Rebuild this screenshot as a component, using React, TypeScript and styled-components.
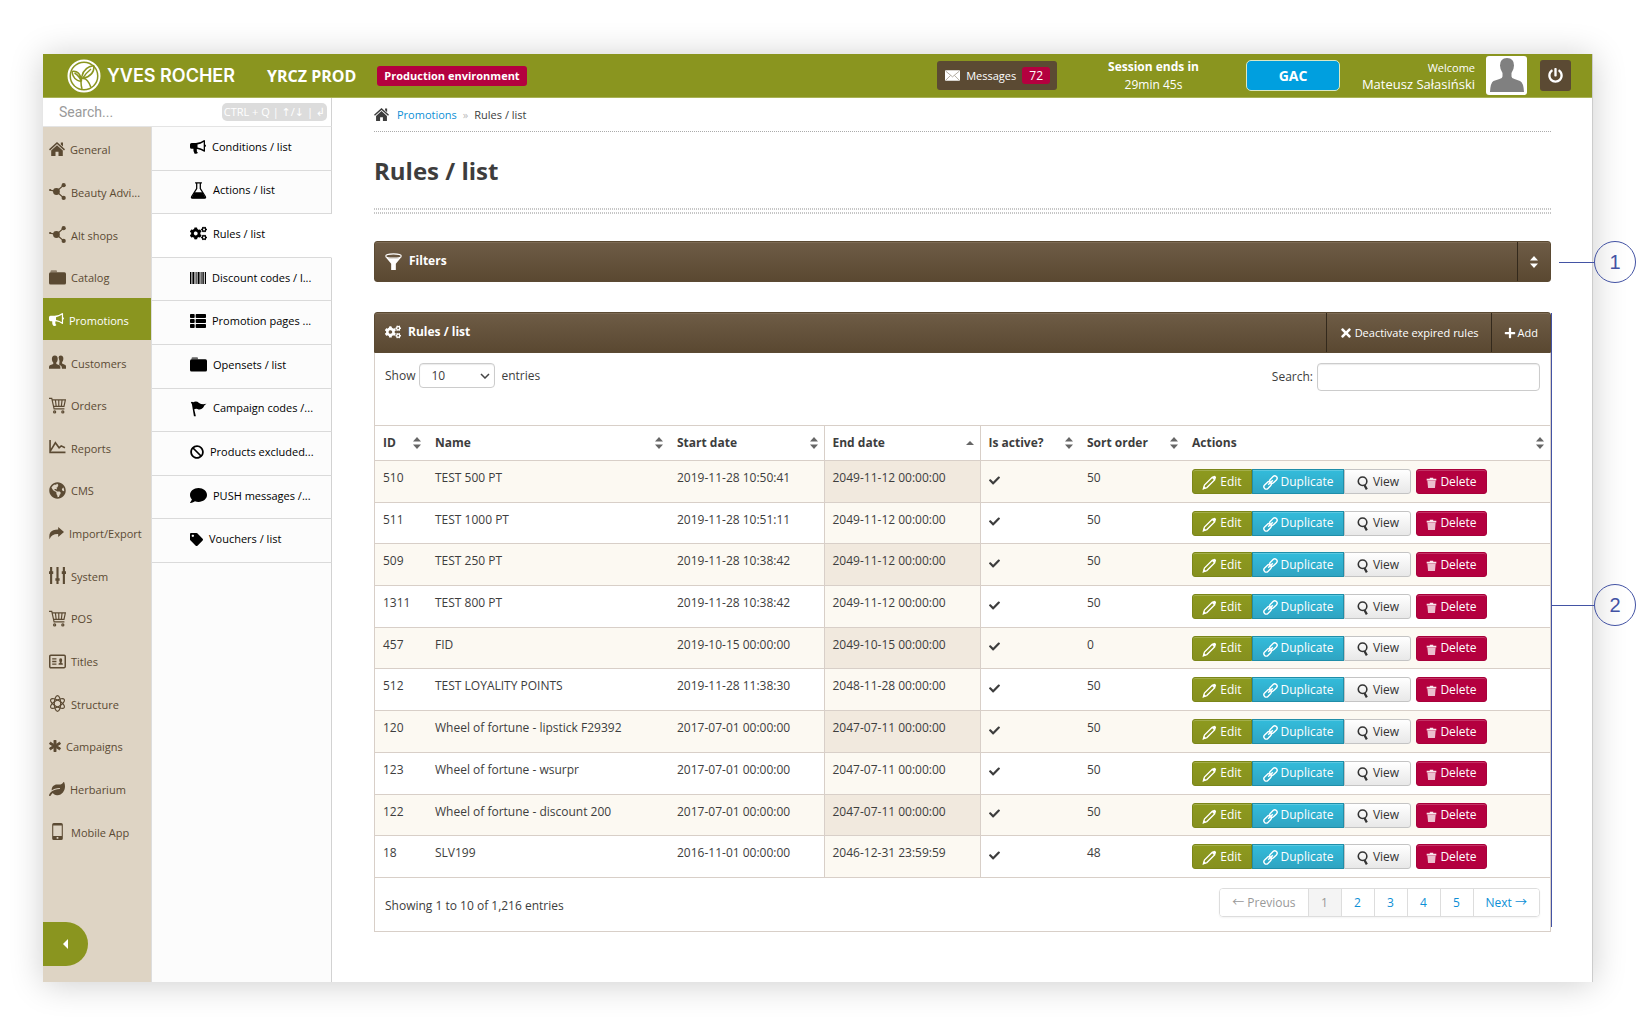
import React, { useState } from "react";
import styled, { createGlobalStyle, css } from "styled-components";
import {
  FaAsterisk,
  FaBan,
  FaCheck,
  FaCogs,
  FaComment,
  FaGlobeAmericas,
  FaLeaf,
  FaPlus,
  FaPowerOff,
  FaTag,
  FaThList,
  FaTimes,
} from "react-icons/fa";

const olive = "#8a951f";
const brown = "#5b4a33";
const sand = "#ded4c4";
const line = "#d8cfc8";
const crimson = "#b4003f";
const link = "#0d8fd6";
const ink = "#3d3d3d";
const marker = "#4353a4";

const GlobalStyle = createGlobalStyle`
  *, *::before, *::after { box-sizing: border-box; }
  body {
    margin: 0;
    background: #fff;
    color: ${ink};
    font-family: "Open Sans", "Noto Sans", sans-serif;
    font-size: 12px;
    line-height: 20px;
  }
  button, input, select { font-family: inherit; font-size: inherit; color: inherit; }
  ul { list-style: none; margin: 0; padding: 0; }
  a { text-decoration: none; color: inherit; }
`;

/* ---------- icons ---------- */

type IconProps = { size?: number };

const Svg = ({ size = 17, children }: IconProps & { children: React.ReactNode }) => (
  <svg width={size} height={size} viewBox="0 0 16 16" fill="currentColor" aria-hidden="true">
    {children}
  </svg>
);

const HomeIcon = (p: IconProps) => (
  <Svg {...p}>
    <path d="M8 1 16 8.300l-1 1.100-7-6.300-7 6.300L0 8.300zM11.800 1.500h2.200v4l-2.200-2z" />
    <path d="M8 4.300l5.800 5.200V15H9.500v-4.200h-3V15H2.200V9.500z" />
  </Svg>
);
const HornIcon = (p: IconProps) => (
  <Svg {...p}>
    <path
      fillRule="evenodd"
      d="M14.200 1q.8 0 .8.900v3.600q1 .3 1 1.300t-1 1.300v3.800q0 .9-.8.900-3.300-2.600-7-2.900-1 .6-.3 1.700-.6 1 1 2.200-.8 1.400-3.300.9Q3 12.500 3.400 9.800H1.600Q0 9.800 0 8.300V5.600Q0 4 1.600 4H6q4.200 0 8.200-3zM13.700 3Q10.500 5.200 7.500 5.500v3q3 .3 6.200 2.300z"
    />
  </Svg>
);
const ShareIcon = (p: IconProps) => (
  <Svg {...p}>
    <path d="M9.800 1 16 6.300l-6.200 5.300V8.600Q3 8.300.6 14q-1.400-7.600 4-9.400 2-.8 5.200-.8z" />
  </Svg>
);
const HubIcon = (p: IconProps) => (
  <Svg {...p}>
    <circle cx="7" cy="8" r="3.2" />
    <circle cx="13.8" cy="2" r="2" />
    <circle cx="13.8" cy="14" r="2" />
    <circle cx="1" cy="6.6" r="1" />
    <path d="M7 8 13.8 2M7 8l6.800 6M7 8 1 6.600" stroke="currentColor" strokeWidth="1.200" />
  </Svg>
);
const FolderIcon = (p: IconProps) => (
  <Svg {...p}>
    <path d="M1.500 3V2q0-.8.8-.8h4.400q.8 0 .8.8v1z" opacity=".6" />
    <path d="M1.500 3h13Q16 3 16 4.500v8.700q0 1.500-1.500 1.500h-13Q0 14.700 0 13.200V4.500Q0 3 1.500 3z" />
  </Svg>
);
const UsersIcon = (p: IconProps) => (
  <Svg {...p}>
    <path d="M9 3.200q0-1.900 2-1.900 2.700 0 2.500 3.400-.1 2-1.200 3v1.200l3 1.400q.7.400.7 1.500v2h-3.800q0-2.300-1.300-2.900l-1.300-.7Q10.700 7 9 3.200z" />
    <path d="M5.500 1.300q2.900 0 2.700 3.600-.1 2-1.300 3.100v1.300l3 1.400q.8.500.8 1.500v1.600H0v-1.600q0-1 .8-1.500l3.200-1.400V8Q2.800 6.900 2.700 4.900 2.600 1.300 5.500 1.300z" />
  </Svg>
);
const CartIcon = (p: IconProps) => (
  <Svg {...p}>
    <g fill="none" stroke="currentColor" strokeWidth="1.100">
      <path d="M0 1.300h2.600l2.200 9.900h9.700M3 2.700h12.400l-1.300 6.200H4.400M6 2.700l.8 6.200M9.200 2.700v6.200M12.300 2.700l-.7 6.200" />
      <circle cx="5.300" cy="14" r="1" />
      <circle cx="13" cy="14" r="1" />
    </g>
  </Svg>
);
const ChartIcon = (p: IconProps) => (
  <Svg {...p}>
    <path d="M1 1v11.600h14.500M1.500 11 6 3.500l3.500 4.800 2-1.800 3.500 1.700" fill="none" stroke="currentColor" strokeWidth="1.500" />
  </Svg>
);
const SlidersIcon = (p: IconProps) => (
  <Svg {...p}>
    <path d="M1 0h2v16H1zM7 0h2v16H7zM13 0h2v16h-2zM0 4h4v2.500H0zM6 10.500h4V13H6zM12 4h4v2.500h-4z" />
  </Svg>
);
const CardIcon = (p: IconProps) => (
  <Svg {...p}>
    <rect x=".7" y="2.200" width="14.600" height="11.600" rx="1" fill="none" stroke="currentColor" strokeWidth="1.400" />
    <path d="M3 5h4v1.200H3zM3 7.400h4v1.200H3zM3 9.800h4V11H3zM9 11V9.800l1.300-.7Q9.200 7.400 9.800 5.500q1.200-1.200 2.400 0 .6 1.900-.5 3.600l1.300.7V11z" />
  </Svg>
);
const AtomIcon = (p: IconProps) => (
  <Svg {...p}>
    <g fill="none" stroke="currentColor" strokeWidth="1.100">
      <ellipse cx="8" cy="8" rx="3" ry="7.400" />
      <ellipse cx="8" cy="8" rx="3" ry="7.400" transform="rotate(60 8 8)" />
      <ellipse cx="8" cy="8" rx="3" ry="7.400" transform="rotate(120 8 8)" />
    </g>
  </Svg>
);
const PhoneIcon = (p: IconProps) => (
  <Svg {...p}>
    <path fillRule="evenodd" d="M4.500 0h7Q13 0 13 1.500v13q0 1.500-1.500 1.500h-7Q3 16 3 14.500v-13Q3 0 4.500 0zM4 2.300v9.900h8V2.300zM7.200 13.200v1.600h1.600v-1.600z" />
  </Svg>
);
const FlaskIcon = (p: IconProps) => (
  <Svg {...p}>
    <path d="M4.800.8h6.400M6.300 1v5.200L1.600 13.600q-.8 1.600.9 1.600h11q1.700 0 .9-1.600L9.700 6.200V1" fill="none" stroke="currentColor" strokeWidth="1.200" />
    <path d="M4.200 9.700h7.600l3 5.500H1.200z" />
  </Svg>
);
const BarcodeIcon = (p: IconProps) => (
  <Svg {...p}>
    <path d="M0 2h1.400v12H0zM2.400 2h2v12h-2zM5.600 2h1v12h-1zM7.600 2h2v12h-2zM10.600 2h1v12h-1zM12.400 2h1.400v12h-1.400zM14.800 2H16v12h-1.200z" />
  </Svg>
);
const FlagIcon = (p: IconProps) => (
  <Svg {...p}>
    <path d="M.8 2.200Q1.800 1 3 2.200q3-1.600 5.500.6 2.800 2 7 .8-2 1-3.200 3.600-2.300 2.600-5.300 1.200-1.500-.6-3 .2l1.500 6.600H3.700L1.800 4z" />
  </Svg>
);
const PencilIcon = (p: IconProps) => (
  <Svg {...p}>
    <path d="M1.500 14.700 2.600 10.800 11 2.400l2.600 2.600L5.200 13.400z" fill="none" stroke="currentColor" strokeWidth="1.400" />
    <path d="M12 1.200q1.200-1 2.400.2t.3 2.400l-1.500 1.500-2.700-2.700zM.8 15.400l1.200-3.600 2.400 2.400z" />
  </Svg>
);
const ChainIcon = (p: IconProps) => (
  <Svg {...p}>
    <g fill="none" stroke="currentColor" strokeWidth="1.500">
      <rect x="6.600" y="2.400" width="9" height="5" rx="2.500" transform="rotate(-45 11.100 4.900)" />
      <rect x=".4" y="8.600" width="9" height="5" rx="2.500" transform="rotate(-45 4.900 11.100)" />
      <path d="m5.500 10.500 5-5" />
    </g>
  </Svg>
);
const LensIcon = (p: IconProps) => (
  <Svg {...p}>
    <circle cx="7.500" cy="6" r="4.900" fill="none" stroke="currentColor" strokeWidth="1.800" />
    <path d="m9.600 10.300 2.800 5" stroke="currentColor" strokeWidth="2.600" />
  </Svg>
);
const TrashIcon = (p: IconProps) => (
  <Svg {...p}>
    <path d="M5.500 1h5v1.500H15V5H1V2.500h4.500z" opacity=".9" />
    <path d="M2 5.500h12L13 16H3z" opacity=".75" />
  </Svg>
);
const FunnelIcon = (p: IconProps) => (
  <Svg {...p}>
    <ellipse cx="8" cy="2.800" rx="7.300" ry="2" fill="none" stroke="currentColor" />
    <path d="M.3 3.500Q3 5.500 8 5.500t7.700-2L10.200 10v6H5.800v-6z" />
  </Svg>
);
const MailIcon = (p: IconProps) => (
  <Svg {...p}>
    <rect y="2.500" width="16" height="11" rx=".8" />
    <path d="m.8 3.400 7.200 6 7.200-6M.8 13l5-5M15.200 13l-5-5" fill="none" stroke="#9a9183" strokeWidth=".8" />
  </Svg>
);
const SortIcon = ({ up = true, down = true }: { up?: boolean; down?: boolean }) => (
  <svg width="8" height="12" viewBox="0 0 8 12" fill="currentColor" aria-hidden="true">
    {up && <path d={down ? "M4 0 8 4.500H0z" : "M4 4 8 8H0z"} />}
    {down && <path d="M4 12 0 7.500h8z" />}
  </svg>
);
const LeafLogo = () => (
  <svg width="34" height="34" viewBox="0 0 34 34" fill="none" aria-hidden="true">
    <circle cx="17" cy="17" r="15.500" stroke="#fff" strokeWidth="2" />
    <circle cx="17" cy="17" r="13" fill="#fff" />
    <g stroke={olive} strokeWidth="1.500">
      <path d="M27 6.500Q17 8 15 17q-2 6 0 13" />
      <path d="M27 6.500Q27.500 17 15.500 19.500" />
      <path d="M5 12.500q8-1.500 9.500 9.500M5 12.500Q6 21 14 22.500M7.500 14q5 3 7 8.500" />
      <path d="M24 10q-5 4-8.500 9.500 5-1 8.500 9" />
    </g>
  </svg>
);

/* ---------- frame ---------- */

const Stage = styled.div`
  position: relative;
  display: flex;
  min-height: 100vh;
  padding: 54px 53px 49px 43px;
`;
const Frame = styled.div`
  flex: 1;
  display: flex;
  flex-direction: column;
  min-width: 0;
  background: #fff;
  border-right: 1px solid #ccc;
  box-shadow: 0 2px 32px rgba(0, 0, 0, 0.2);
`;
const Body = styled.div`
  flex: 1;
  display: flex;
`;

/* ---------- header ---------- */

const Header = styled.header`
  display: flex;
  align-items: center;
  height: 44px;
  padding: 0 21px 0 24px;
  background: ${olive};
  color: #fff;
  border-bottom: 1px solid #a9b255;
`;
const Brand = styled.a`
  display: flex;
  align-items: center;
  gap: 6px;
  width: 200px;
  font: 600 18px/24px Inter, sans-serif;
  white-space: nowrap;
`;
const Shop = styled.strong`
  margin-right: 21px;
  font-size: 16px;
`;
const EnvTag = styled.span`
  padding: 0 7px;
  border-radius: 3px;
  background: ${crimson};
  font-size: 11px;
  font-weight: 700;
`;
const MessagesButton = styled.button`
  display: flex;
  align-items: center;
  gap: 6px;
  height: 29px;
  margin-left: auto;
  padding: 0 7px 0 8px;
  border: 0;
  border-radius: 3px;
  background: ${brown};
  color: #fff;
  font-size: 11px;
`;
const Count = styled.span`
  padding: 0 7px;
  border-radius: 3px;
  background: ${crimson};
  font-size: 12px;
`;
const Session = styled.div`
  width: 189px;
  padding-left: 4px;
  font-size: 12px;
  line-height: 18px;
  text-align: center;
`;
const GacButton = styled.button`
  width: 94px;
  height: 31px;
  padding: 0;
  border: 1px solid #d9e8c4;
  border-radius: 5px;
  background: #009fdf;
  color: #fff;
  font-size: 14px;
  font-weight: 700;
`;
const Welcome = styled.div`
  width: 135px;
  margin-right: 11px;
  font-size: 13px;
  line-height: 16px;
  text-align: right;

  small { display: block; font-size: 11px; }
`;
const Avatar = styled.svg`
  width: 41px;
  height: 39px;
  border-radius: 3px;
  background: #fff;
`;
const PowerButton = styled.button`
  display: grid;
  place-items: center;
  width: 31px;
  height: 31px;
  margin-left: 13px;
  padding: 0;
  border: 0;
  border-radius: 3px;
  background: ${brown};
  color: #fff;
`;

/* ---------- side navigation ---------- */

const Side = styled.aside`
  display: flex;
  flex-direction: column;
  width: 289px;
`;
const QuickSearch = styled.label`
  display: flex;
  align-items: center;
  height: 29px;
  padding: 0 4px 0 16px;
  border-right: 1px solid #d2d2d2;
  border-bottom: 1px solid #e4e4e4;
`;
const QuickInput = styled.input`
  flex: 1;
  min-width: 0;
  padding: 0;
  border: 0;
  outline: 0;
  background: none;
  font: 14px Roboto, sans-serif;
  &::placeholder { color: #9a9a9a; opacity: 1; }
`;
const Shortcut = styled.kbd`
  padding: 0 2px;
  border-radius: 5px;
  background: #dcdcdc;
  color: #fff;
  font: 11px/18px "Open Sans", "DejaVu Sans", sans-serif;
`;
const Columns = styled.div`
  flex: 1;
  display: flex;
`;
const MainNav = styled.nav`
  display: flex;
  flex-direction: column;
  width: 109px;
  background: ${sand};
  border-right: 1px solid #ddd;
`;
const MainList = styled.ul`
  display: flex;
  flex-direction: column;
  height: 725px;

  li { flex: 1; display: flex; }
`;
const MainLink = styled.a<{ $active?: boolean }>`
  flex: 1;
  display: flex;
  align-items: center;
  gap: 5px;
  padding: 4px 0 0 6px;
  font-size: 11px;
  line-height: 16px;
  white-space: nowrap;
  color: ${(p) => (p.$active ? "#fff" : brown)};
  background: ${(p) => (p.$active ? olive : "transparent")};

  svg { margin-bottom: 2px; }
`;
const CollapseButton = styled.button`
  display: grid;
  place-items: center;
  width: 45px;
  height: 44px;
  margin: auto 0 16px;
  border: 0;
  border-radius: 0 22px 22px 0;
  background: ${olive};
  color: #fff;
`;
const SubNav = styled.nav`
  flex: 1;
  display: flex;
  flex-direction: column;
  min-width: 0;
`;
const SubList = styled.ul`
  display: flex;
  flex-direction: column;
  height: 436px;

  li { flex: 1; display: flex; }
`;
const SubRest = styled.div`
  flex: 1;
  background: #fcfcfc;
  border-right: 1px solid #d2d2d2;
`;
const SubLink = styled.a<{ $active?: boolean }>`
  flex: 1;
  display: flex;
  align-items: center;
  gap: 6px;
  padding: 0 0 3px 38px;
  border-bottom: 1px solid #dadada;
  border-right: 1px solid ${(p) => (p.$active ? "#fff" : "#d2d2d2")};
  background: ${(p) => (p.$active ? "#fff" : "#fcfcfc")};
  color: #000;
  font-size: 11px;
  line-height: 16px;
  white-space: nowrap;
`;

/* ---------- content ---------- */

const Content = styled.main`
  flex: 1;
  min-width: 0;
  padding: 0 41px 48px 42px;
`;
const Crumbs = styled.nav`
  display: flex;
  align-items: center;
  height: 34px;
  border-bottom: 1px dotted #aaa;
  font-size: 11px;

  svg { margin-right: 8px; }
  a { color: ${link}; }
  i { margin: 0 6px; font-style: normal; color: #bbb; }
`;
const Title = styled.h1`
  display: flex;
  align-items: center;
  height: 76px;
  margin: 0;
  padding-top: 2px;
  font-size: 24px;
  line-height: 32px;
`;
const DottedRule = styled.div`
  height: 6px;
  margin-bottom: 27px;
  background:
    linear-gradient(#fff, #fff) center / 100% 2px no-repeat,
    repeating-linear-gradient(90deg, #c6c6c6 0 1px, #fff 1px 2px);
`;
const Bar = styled.div<{ $alone?: boolean }>`
  display: flex;
  align-items: stretch;
  height: 41px;
  padding-left: 10px;
  border: 1px solid ${brown};
  border-radius: ${(p) => (p.$alone ? "3px" : "3px 3px 0 0")};
  background: linear-gradient(#6e5c46, #5a4831);
  box-shadow: inset 0 1px 0 #7d6b55;
  color: #fff;
  margin-bottom: ${(p) => (p.$alone ? "30px" : "0")};
`;
const BarTitle = styled.h2`
  display: flex;
  align-items: center;
  gap: 7px;
  flex: 1;
  margin: 0;
  padding-bottom: 1px;
  font-size: 12px;
`;
const BarButton = styled.button`
  display: flex;
  align-items: center;
  justify-content: center;
  gap: 2px;
  padding: 0 12px;
  border: 0;
  border-left: 1px solid #33291c;
  background: none;
  color: #fff;
  font-size: 11px;
`;
const PanelBody = styled.div`
  border: 1px solid ${line};
  border-top: 0;
`;
const Tools = styled.div`
  display: flex;
  justify-content: space-between;
  align-items: flex-start;
  height: 72px;
  padding: 10px;
`;
const Field = styled.label`
  display: flex;
  align-items: center;
  gap: 4px;
  white-space: nowrap;
`;
const control = css`
  border: 1px solid #ccc;
  border-radius: 4px;
  background-color: #fff;
  box-shadow: inset 0 1px 1px rgba(0, 0, 0, 0.08);
`;
const SizeSelect = styled.select`
  ${control}
  width: 76px;
  height: 25px;
  margin-right: 2px;
  padding: 0 26px 0 11px;
  appearance: none;
  background: #fff
    url("data:image/svg+xml,%3Csvg xmlns='http://www.w3.org/2000/svg' width='10' height='6' fill='none' stroke='%23444' stroke-width='1.500'%3E%3Cpath d='M1 1l4 4 4-4'/%3E%3C/svg%3E")
    right 4px center no-repeat;
`;
const SearchInput = styled.input`
  ${control}
  width: 223px;
  height: 28px;
  padding: 0 6px;
`;
const Table = styled.table`
  width: 100%;
  height: 453px;
  table-layout: fixed;
  border-collapse: collapse;
`;
const HeadCell = styled.th<{ $sorted?: boolean; $width?: number }>`
  width: ${(p) => (p.$width ? `${p.$width}px` : "auto")};
  height: 35px;
  padding: 0 6px 0 8px;
  border: solid ${line};
  border-width: ${(p) => (p.$sorted ? "1px" : "1px 0")};
  font-size: 12px;
  text-align: left;
`;
const HeadInner = styled.button`
  display: flex;
  align-items: center;
  justify-content: space-between;
  width: 100%;
  padding: 0;
  border: 0;
  background: none;
  font-weight: 700;
  line-height: 20px;
  white-space: nowrap;

  svg { color: #666; }
`;
const Cell = styled.td<{ $sorted?: boolean }>`
  padding: 7px 0 0 8px;
  border: solid ${line};
  border-width: ${(p) => (p.$sorted ? "1px" : "1px 0")};
  vertical-align: top;
  white-space: nowrap;
`;
const Active = styled.span`
  display: flex;
  align-items: center;
  height: 24px;
`;
const Row = styled.tr`
  &:nth-child(odd) { background: #fcf9f2; }
  ${Cell}:nth-child(4) { background: #fcf9f2; }
  &:nth-child(odd) ${Cell}:nth-child(4) { background: #f1e9de; }
`;
const Actions = styled.div`
  display: flex;
  padding-top: 1px;
`;
const tones = {
  edit: css`background: linear-gradient(#8d9a1e, #86901f); border-color: #7b8618; color: #fff;`,
  copy: css`background: linear-gradient(#33bcdb, #2fa4c2); border-color: #1f8ea9; color: #fff;`,
  view: css`background: linear-gradient(#fff, #e8e8e8); border-color: #c4c4c4; color: #333;`,
  drop: css`background: ${crimson}; border-color: #a8003a; color: #fff;`,
};
const ActionButton = styled.button<{ $tone: keyof typeof tones; $width: number }>`
  display: flex;
  align-items: center;
  justify-content: center;
  gap: 3px;
  width: ${(p) => p.$width}px;
  height: 25px;
  padding: 0;
  border: 1px solid;
  ${(p) => tones[p.$tone]}
  border-radius: ${(p) => ({ edit: "3px 0 0 3px", copy: "0", view: "0 3px 3px 0", drop: "3px" })[p.$tone]};
  margin-left: ${(p) => (p.$tone === "drop" ? "5px" : "0")};
  box-shadow: inset 0 1px 0 rgba(255, 255, 255, 0.2);
  line-height: 18px;

  svg { margin-top: 2px; }
`;
const Footer = styled.div`
  display: flex;
  justify-content: space-between;
  height: 53px;
  padding: 10px;
`;
const Summary = styled.p`
  margin: 8px 0 0;
`;
const Pager = styled.nav`
  display: flex;
  height: 29px;
  border: 1px solid #ddd;
  border-radius: 4px;
  box-shadow: 0 1px 2px rgba(0, 0, 0, 0.05);
  overflow: hidden;
`;
const PageButton = styled.button<{ $current?: boolean }>`
  padding: 0 12px;
  border: 0;
  background: ${(p) => (p.$current ? "#f4f4f4" : "#fff")};
  color: ${link};
  & + & { min-width: 33px; border-left: 1px solid #ddd; }
  &:disabled { color: #999; }
`;
const Arrow = styled.span`
  font-family: "Noto Sans CJK SC", sans-serif;
  line-height: 16px;
`;

/* ---------- markers over the window ---------- */

const Marker = styled.div<{ $top: number; $reach: number }>`
  position: absolute;
  top: ${(p) => p.$top}px;
  right: 10px;
  display: flex;
  align-items: center;

  &::before {
    content: "";
    width: ${(p) => p.$reach}px;
    height: 1px;
    background: ${marker};
  }
`;
const MarkerDot = styled.span`
  display: grid;
  place-items: center;
  width: 42px;
  height: 42px;
  border: 1px solid ${marker};
  border-radius: 50%;
  color: ${marker};
  font: 20px "Liberation Sans", Arial, sans-serif;
`;
const MarkerSpan = styled.div`
  position: absolute;
  top: 313px;
  right: 94px;
  width: 1px;
  height: 614px;
  background: ${marker};
`;

/* ---------- data ---------- */

const mainItems: [string, React.ReactNode][] = [
  ["General", <HomeIcon size={16} />],
  ["Beauty Advi...", <HubIcon />],
  ["Alt shops", <HubIcon />],
  ["Catalog", <FolderIcon />],
  ["Promotions", <HornIcon size={15} />],
  ["Customers", <UsersIcon />],
  ["Orders", <CartIcon />],
  ["Reports", <ChartIcon />],
  ["CMS", <FaGlobeAmericas size={17} />],
  ["Import/Export", <ShareIcon size={15} />],
  ["System", <SlidersIcon />],
  ["POS", <CartIcon />],
  ["Titles", <CardIcon />],
  ["Structure", <AtomIcon />],
  ["Campaigns", <FaAsterisk size={12} stroke="currentColor" strokeWidth={40} />],
  ["Herbarium", <FaLeaf size={16} />],
  ["Mobile App", <PhoneIcon />],
];

const subItems: [string, React.ReactNode][] = [
  ["Conditions / list", <HornIcon size={16} />],
  ["Actions / list", <FlaskIcon size={17} />],
  ["Rules / list", <FaCogs size={17} />],
  ["Discount codes / l...", <BarcodeIcon size={16} />],
  ["Promotion pages ...", <FaThList size={16} />],
  ["Opensets / list", <FolderIcon size={17} />],
  ["Campaign codes /...", <FlagIcon size={17} />],
  ["Products excluded...", <FaBan size={14} />],
  ["PUSH messages /...", <FaComment size={17} />],
  ["Vouchers / list", <FaTag size={13} />],
];

const columns: [string, number?][] = [
  ["ID", 52],
  ["Name", 242],
  ["Start date", 155],
  ["End date", 156],
  ["Is active?", 99],
  ["Sort order", 105],
  ["Actions"],
];

const rows = [
  ["510", "TEST 500 PT", "2019-11-28 10:50:41", "2049-11-12 00:00:00", "50"],
  ["511", "TEST 1000 PT", "2019-11-28 10:51:11", "2049-11-12 00:00:00", "50"],
  ["509", "TEST 250 PT", "2019-11-28 10:38:42", "2049-11-12 00:00:00", "50"],
  ["1311", "TEST 800 PT", "2019-11-28 10:38:42", "2049-11-12 00:00:00", "50"],
  ["457", "FID", "2019-10-15 00:00:00", "2049-10-15 00:00:00", "0"],
  ["512", "TEST LOYALITY POINTS", "2019-11-28 11:38:30", "2048-11-28 00:00:00", "50"],
  ["120", "Wheel of fortune - lipstick F29392", "2017-07-01 00:00:00", "2047-07-11 00:00:00", "50"],
  ["123", "Wheel of fortune - wsurpr", "2017-07-01 00:00:00", "2047-07-11 00:00:00", "50"],
  ["122", "Wheel of fortune - discount 200", "2017-07-01 00:00:00", "2047-07-11 00:00:00", "50"],
  ["18", "SLV199", "2016-11-01 00:00:00", "2046-12-31 23:59:59", "48"],
];

/* ---------- page ---------- */

const TopBar = () => (
  <Header>
    <Brand href="#">
      <LeafLogo />
      YVES ROCHER
    </Brand>
    <Shop>YRCZ PROD</Shop>
    <EnvTag>Production environment</EnvTag>
    <MessagesButton type="button">
      <MailIcon size={15} />
      Messages
      <Count>72</Count>
    </MessagesButton>
    <Session>
      <strong>Session ends in</strong>
      <div>29min 45s</div>
    </Session>
    <GacButton type="button">GAC</GacButton>
    <Welcome>
      <small>Welcome</small>
      Mateusz Sałasiński
    </Welcome>
    <Avatar viewBox="0 0 41 39" aria-hidden="true">
      <path
        d="M21 2q7 0 7 7.500 0 4-2.500 7.500v3.500q0 1.500 3 2.500l5.500 2q3.500 1.500 4 11H4q.5-9.500 3.500-11l6-2q3-1 3-2.500V17Q14 13.500 14 9.500 14 2 21 2z"
        fill="#808080"
      />
    </Avatar>
    <PowerButton type="button" aria-label="Log out">
      <FaPowerOff size={15} />
    </PowerButton>
  </Header>
);

const Navigation = () => (
  <Side>
    <QuickSearch>
      <QuickInput type="text" placeholder="Search..." aria-label="Search the menu" />
      <Shortcut>CTRL + Q | ↑/↓ | ↲</Shortcut>
    </QuickSearch>
    <Columns>
      <MainNav>
        <MainList>
          {mainItems.map(([label, icon]) => (
            <li key={label}>
              <MainLink href="#" $active={label === "Promotions"}>
                {icon}
                {label}
              </MainLink>
            </li>
          ))}
        </MainList>
        <CollapseButton type="button" aria-label="Collapse menu">
          <svg width="5" height="10" viewBox="0 0 5 10" fill="currentColor">
            <path d="M5 0v10L0 5z" />
          </svg>
        </CollapseButton>
      </MainNav>
      <SubNav>
        <SubList>
          {subItems.map(([label, icon]) => (
            <li key={label}>
              <SubLink href="#" $active={label === "Rules / list"}>
                {icon}
                {label}
              </SubLink>
            </li>
          ))}
        </SubList>
        <SubRest />
      </SubNav>
    </Columns>
  </Side>
);

const RulesTable = () => (
  <Table>
    <thead>
      <tr>
        {columns.map(([label, width]) => (
          <HeadCell key={label} $width={width} $sorted={label === "End date"}>
            <HeadInner type="button">
              {label}
              <SortIcon down={label !== "End date"} />
            </HeadInner>
          </HeadCell>
        ))}
      </tr>
    </thead>
    <tbody>
      {rows.map(([id, name, start, end, order]) => (
        <Row key={id}>
          <Cell>{id}</Cell>
          <Cell>{name}</Cell>
          <Cell>{start}</Cell>
          <Cell $sorted>{end}</Cell>
          <Cell>
            <Active>
              <FaCheck size={11} />
            </Active>
          </Cell>
          <Cell>{order}</Cell>
          <Cell>
            <Actions>
              <ActionButton type="button" $tone="edit" $width={60}>
                <PencilIcon size={15} />
                Edit
              </ActionButton>
              <ActionButton type="button" $tone="copy" $width={92}>
                <ChainIcon size={15} />
                Duplicate
              </ActionButton>
              <ActionButton type="button" $tone="view" $width={67}>
                <LensIcon size={14} />
                View
              </ActionButton>
              <ActionButton type="button" $tone="drop" $width={71}>
                <TrashIcon size={11} />
                Delete
              </ActionButton>
            </Actions>
          </Cell>
        </Row>
      ))}
    </tbody>
  </Table>
);

export default function App() {
  const [size, setSize] = useState("10");
  return (
    <>
      <GlobalStyle />
      <Stage>
        <Frame>
          <TopBar />
          <Body>
            <Navigation />
            <Content>
              <Crumbs>
                <HomeIcon size={15} />
                <a href="#">Promotions</a>
                <i>»</i>
                <span>Rules / list</span>
              </Crumbs>
              <Title>Rules / list</Title>
              <DottedRule />
              <Bar $alone>
                <BarTitle>
                  <FunnelIcon size={17} />
                  Filters
                </BarTitle>
                <BarButton type="button" aria-label="Toggle filters">
                  <SortIcon />
                </BarButton>
              </Bar>
              <section>
                <Bar>
                  <BarTitle>
                    <FaCogs size={16} />
                    Rules / list
                  </BarTitle>
                  <BarButton type="button">
                    <FaTimes size={14} />
                    Deactivate expired rules
                  </BarButton>
                  <BarButton type="button">
                    <FaPlus size={12} />
                    Add
                  </BarButton>
                </Bar>
                <PanelBody>
                  <Tools>
                    <Field>
                      Show
                      <SizeSelect value={size} onChange={(e) => setSize(e.target.value)}>
                        <option>10</option>
                        <option>25</option>
                        <option>50</option>
                      </SizeSelect>
                      entries
                    </Field>
                    <Field>
                      Search:
                      <SearchInput type="text" />
                    </Field>
                  </Tools>
                  <RulesTable />
                  <Footer>
                    <Summary>Showing 1 to 10 of 1,216 entries</Summary>
                    <Pager aria-label="Pages">
                      <PageButton type="button" disabled><Arrow>←</Arrow> Previous</PageButton>
                      <PageButton type="button" disabled $current>1</PageButton>
                      <PageButton type="button">2</PageButton>
                      <PageButton type="button">3</PageButton>
                      <PageButton type="button">4</PageButton>
                      <PageButton type="button">5</PageButton>
                      <PageButton type="button">Next <Arrow>→</Arrow></PageButton>
                    </Pager>
                  </Footer>
                </PanelBody>
              </section>
            </Content>
          </Body>
        </Frame>
        <MarkerSpan />
        <Marker $top={241} $reach={35}>
          <MarkerDot>1</MarkerDot>
        </Marker>
        <Marker $top={584} $reach={42}>
          <MarkerDot>2</MarkerDot>
        </Marker>
      </Stage>
    </>
  );
}
